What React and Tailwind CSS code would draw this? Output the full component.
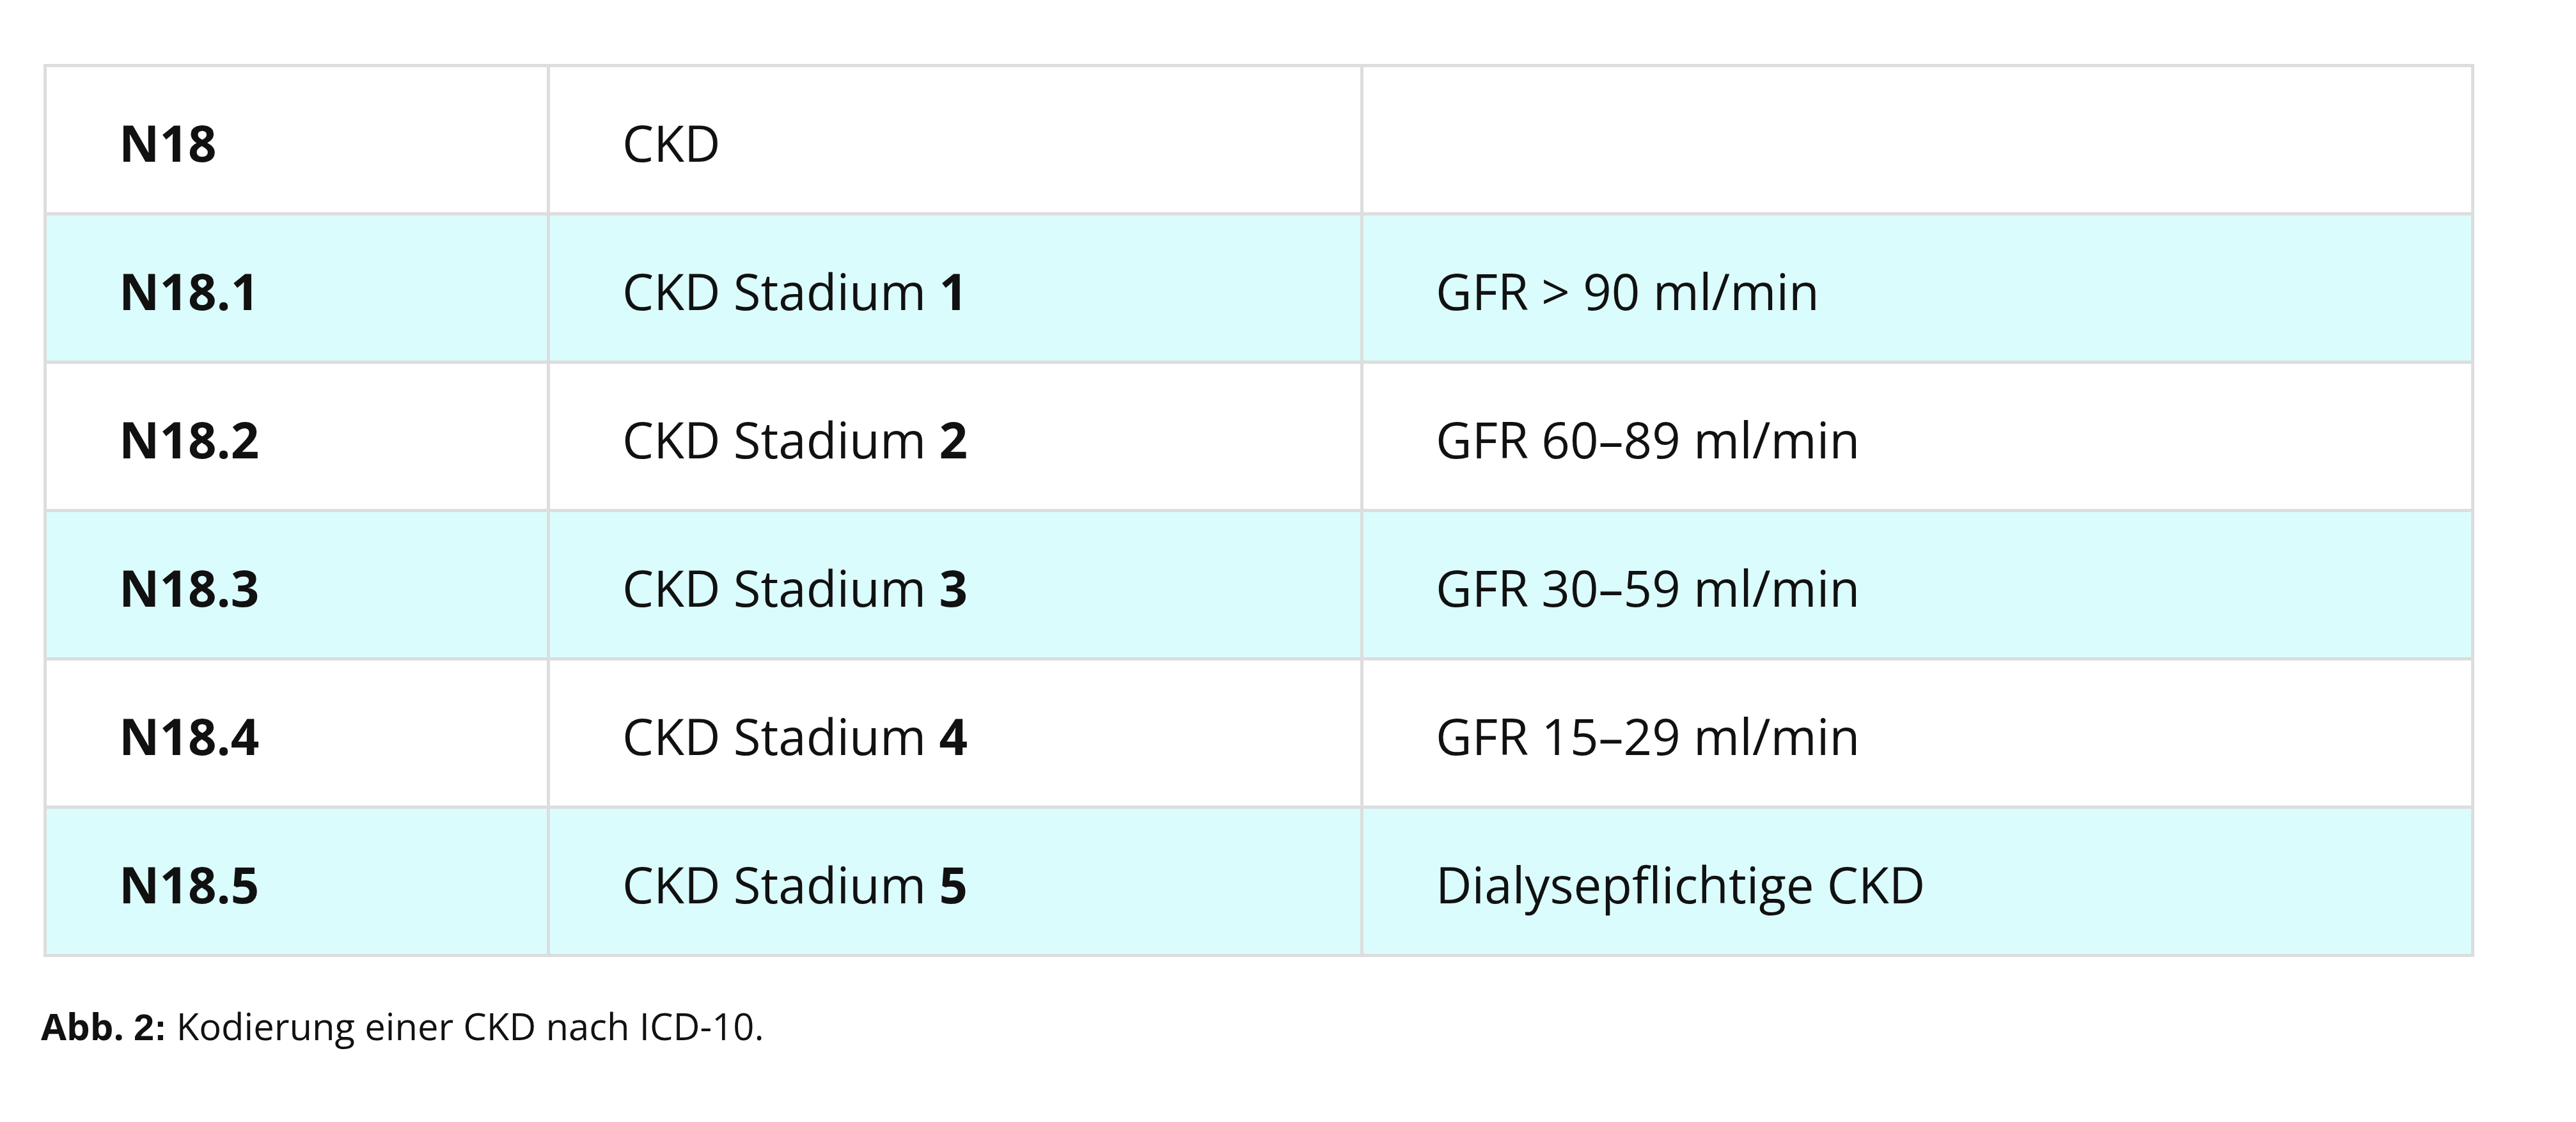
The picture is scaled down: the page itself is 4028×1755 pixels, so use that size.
const rows = [
  { code: "N18", label: "CKD", stage: null, gfr: "" },
  { code: "N18.1", label: "CKD Stadium", stage: "1", gfr: "GFR > 90 ml/min" },
  { code: "N18.2", label: "CKD Stadium", stage: "2", gfr: "GFR 60–89 ml/min" },
  { code: "N18.3", label: "CKD Stadium", stage: "3", gfr: "GFR 30–59 ml/min" },
  { code: "N18.4", label: "CKD Stadium", stage: "4", gfr: "GFR 15–29 ml/min" },
  { code: "N18.5", label: "CKD Stadium", stage: "5", gfr: "Dialysepflichtige CKD" },
];

const App = () => {
  return (
    <div className="min-h-screen bg-white pl-[68px] pt-[100px] font-['Open_Sans',sans-serif] text-[#111]">
      <table className="w-[3796px] table-fixed border-collapse">
        <colgroup>
          <col className="w-[787px]" />
          <col className="w-[1272px]" />
          <col className="w-[1737px]" />
        </colgroup>
        <tbody>
          {rows.map((row, i) => (
            <tr key={row.code} className={i % 2 === 1 ? "bg-[#dbfcfd]" : "bg-white"}>
              <td className="h-[232px] border-[5px] border-[#dddddd] pl-[113px] pt-[8px] align-middle text-[78px] font-bold leading-none">
                {row.code}
              </td>
              <td className="h-[232px] border-[5px] border-[#dddddd] pl-[113px] pt-[8px] align-middle text-[78px] leading-none">
                {row.label}
                {row.stage && (
                  <>
                    {" "}
                    <span className="font-bold">{row.stage}</span>
                  </>
                )}
              </td>
              <td className="h-[232px] border-[5px] border-[#dddddd] pl-[113px] pt-[8px] align-middle text-[78px] leading-none">
                {row.gfr}
              </td>
            </tr>
          ))}
        </tbody>
      </table>

      {/* Bildunterschrift */}
      <p className="mt-[64px] -ml-[4px] text-[58px] leading-normal">
        <span className="font-bold">Abb. </span>
        <span className="font-['Liberation_Sans',sans-serif] font-bold">2:</span> Kodierung einer CKD nach ICD-10.
      </p>
    </div>
  );
};

export default App;
